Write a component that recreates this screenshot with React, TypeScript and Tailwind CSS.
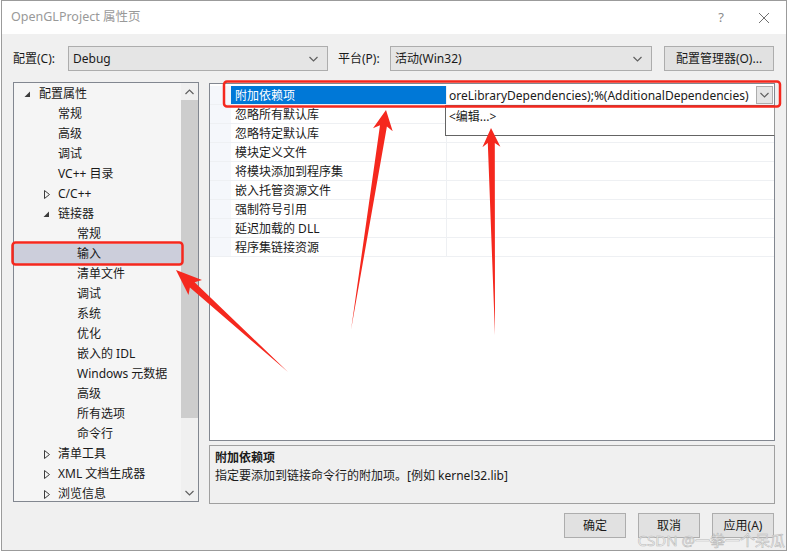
import React from "react";

type TreeItem = { t: string; lvl: 1 | 2 | 3; tri?: "open" | "closed"; sel?: boolean };

const treeItems: TreeItem[] = [
    { t: "配置属性", lvl: 1, tri: "open" },
    { t: "常规", lvl: 2 },
    { t: "高级", lvl: 2 },
    { t: "调试", lvl: 2 },
    { t: "VC++ 目录", lvl: 2 },
    { t: "C/C++", lvl: 2, tri: "closed" },
    { t: "链接器", lvl: 2, tri: "open" },
    { t: "常规", lvl: 3 },
    { t: "输入", lvl: 3, sel: true },
    { t: "清单文件", lvl: 3 },
    { t: "调试", lvl: 3 },
    { t: "系统", lvl: 3 },
    { t: "优化", lvl: 3 },
    { t: "嵌入的 IDL", lvl: 3 },
    { t: "Windows 元数据", lvl: 3 },
    { t: "高级", lvl: 3 },
    { t: "所有选项", lvl: 3 },
    { t: "命令行", lvl: 3 },
    { t: "清单工具", lvl: 2, tri: "closed" },
    { t: "XML 文档生成器", lvl: 2, tri: "closed" },
    { t: "浏览信息", lvl: 2, tri: "closed" },
];

const levelPad = { 1: "pl-[10px]", 2: "pl-[29px]", 3: "pl-[48px]" };

const gridRows = [
    "附加依赖项",
    "忽略所有默认库",
    "忽略特定默认库",
    "模块定义文件",
    "将模块添加到程序集",
    "嵌入托管资源文件",
    "强制符号引用",
    "延迟加载的 DLL",
    "程序集链接资源",
];

const font = "font-['Noto_Sans','Noto_Sans_CJK_SC',sans-serif]";

const Chevron = ({ up = false, className = "" }: { up?: boolean; className?: string }) => (
    <svg width="9" height="6" viewBox="0 0 9 6" className={className}>
        <polyline
            points={up ? "0.5,5 4.5,1 8.5,5" : "0.5,1 4.5,5 8.5,1"}
            fill="none"
            stroke="#606060"
            strokeWidth="1.2"
        />
    </svg>
);

const Combo = ({ value, w }: { value: string; w: string }) => (
    <div className={`${w} h-[25px] flex items-center justify-between border border-[#adadad] bg-[#e5e5e5] pl-[4px] pr-[9px]`}>
        <span>{value}</span>
        <Chevron />
    </div>
);

const Triangle = ({ kind }: { kind: "open" | "closed" }) =>
    kind === "open" ? (
        <svg width="7" height="7" viewBox="0 0 7 7">
            <polygon points="6,0.5 6,6 0.5,6" fill="#3c3c3c" />
        </svg>
    ) : (
        <svg width="6" height="9" viewBox="0 0 6 9" className="ml-[1px]">
            <polygon points="0.5,0.5 5.5,4.5 0.5,8.5" fill="none" stroke="#3c3c3c" strokeWidth="1" />
        </svg>
    );

function arrowPoints(
    tip: [number, number],
    tail: [number, number],
    headLen: number,
    headHalf: number,
    shaftHalf: number
) {
    const dx = tail[0] - tip[0];
    const dy = tail[1] - tip[1];
    const len = Math.hypot(dx, dy);
    const ux = dx / len;
    const uy = dy / len;
    const nx = -uy;
    const ny = ux;
    const bx = tip[0] + ux * headLen;
    const by = tip[1] + uy * headLen;
    const nb = 4; // notch back of head
    const pts: [number, number][] = [
        tip,
        [bx + nx * headHalf, by + ny * headHalf],
        [bx - ux * nb + nx * shaftHalf, by - uy * nb + ny * shaftHalf],
        tail,
        [bx - ux * nb - nx * shaftHalf, by - uy * nb - ny * shaftHalf],
        [bx - nx * headHalf, by - ny * headHalf],
    ];
    return pts.map((p) => `${p[0].toFixed(1)},${p[1].toFixed(1)}`).join(" ");
}

const Annotations = () => (
    <svg
        className="absolute left-0 top-0 pointer-events-none"
        width="788"
        height="553"
        viewBox="0 0 788 553"
    >
        <rect x="12.5" y="242.5" width="170" height="22" rx="3" fill="none" stroke="#f5281e" strokeWidth="2.5" />
        <rect x="224" y="81.5" width="556" height="25" rx="3" fill="none" stroke="#f5281e" strokeWidth="2.5" />
        <polygon points={arrowPoints([176, 270], [288, 372], 26, 10, 3.5)} fill="#f5281e" />
        <polygon points={arrowPoints([386, 110], [351, 330], 20, 10, 3.5)} fill="#f5281e" />
        <polygon points={arrowPoints([491, 128], [495, 335], 19, 9, 3.5)} fill="#f5281e" />
    </svg>
);

const App = () => {
    return (
        <div className={`relative w-[788px] h-[553px] overflow-hidden bg-white text-[12px] text-[#1a1a1a] ${font}`}>
            <div className="ml-[1px] w-[786px] h-[551px] border border-[#9b9b9b] bg-[#f0f0f0] flex flex-col">
                {/* title bar */}
                <div className="h-[33px] bg-white flex items-center justify-between pl-[9px] pr-[16px]">
                    <span className="text-[#999999] text-[12.5px]">OpenGLProject 属性页</span>
                    <div className="flex items-center gap-[34px] text-[#8a8a8a]">
                        <span className="text-[13px]">?</span>
                        <svg width="12" height="12" viewBox="0 0 12 12">
                            <path d="M1 1 L11 11 M11 1 L1 11" stroke="#707070" strokeWidth="1" />
                        </svg>
                    </div>
                </div>

                <div className="flex flex-col px-[11px]">
                    {/* config row */}
                    <div className="mt-[12px] flex items-center h-[25px]">
                        <span className="w-[55px]">配置(C):</span>
                        <Combo value="Debug" w="w-[260px]" />
                        <span className="ml-[10px] w-[52px]">平台(P):</span>
                        <Combo value="活动(Win32)" w="w-[262px]" />
                        <div className="ml-[12px] w-[110px] h-[25px] flex items-center justify-center border border-[#adadad] bg-[#e1e1e1]">
                            配置管理器(O)...
                        </div>
                    </div>

                    {/* main area */}
                    <div className="mt-[11px] flex gap-[10px]">
                        {/* tree */}
                        <div className="w-[186px] h-[420px] border border-[#828790] bg-[#f5f5f5] flex overflow-hidden">
                            <div className="flex-1 flex flex-col overflow-hidden pt-[1px]">
                                {treeItems.map((it, i) => (
                                    <div
                                        key={i}
                                        className={`h-[20px] shrink-0 flex items-center ${levelPad[it.lvl]} ${it.sel ? "bg-[#cccedb]" : ""}`}
                                    >
                                        <div className="w-[15px] flex items-center">
                                            {it.tri && <Triangle kind={it.tri} />}
                                        </div>
                                        <span className="whitespace-nowrap">{it.t}</span>
                                    </div>
                                ))}
                            </div>
                            <div className="w-[17px] bg-[#f0f0f0] flex flex-col items-center">
                                <div className="h-[17px] flex items-center justify-center">
                                    <Chevron up />
                                </div>
                                <div className="w-[17px] h-[318px] bg-[#cdcdcd]" />
                                <div className="flex-1" />
                                <div className="h-[17px] flex items-center justify-center">
                                    <Chevron />
                                </div>
                            </div>
                        </div>

                        {/* right column */}
                        <div className="flex-1 flex flex-col mt-[1px]">
                            <div className="relative h-[358px] border border-[#828790] bg-white pt-[2px]">
                                {gridRows.map((name, i) => (
                                    <div key={i} className="h-[19px] flex border-b border-[#eef0f3]">
                                        <div className="w-[21px] bg-[#f5f7fb]" />
                                        <div
                                            className={`w-[215px] flex items-center pl-[4px] pt-[1px] whitespace-nowrap ${
                                                i === 0 ? "bg-[#0078d7] text-white" : ""
                                            }`}
                                        >
                                            {name}
                                        </div>
                                        <div className="w-[1px] bg-[#eef0f3]" />
                                        <div className="flex-1 flex items-center overflow-hidden">
                                            {i === 0 && (
                                                <div className="flex-1 flex items-center justify-between pl-[2px]">
                                                    <span className="whitespace-nowrap pt-[1px]">
                                                        oreLibraryDependencies);%(AdditionalDependencies)
                                                    </span>
                                                    <div className="w-[17px] h-[18px] mr-[1px] flex items-center justify-center border border-[#adadad] bg-[#e5e5e5]">
                                                        <Chevron />
                                                    </div>
                                                </div>
                                            )}
                                        </div>
                                    </div>
                                ))}
                                {/* dropdown */}
                                <div className="absolute left-[235px] top-[21px] w-[330px] h-[31px] bg-white border border-[#646464] border-r-[#999999] border-r-dotted pl-[3px] pt-[2px]">
                                    &lt;编辑...&gt;
                                </div>
                            </div>

                            <div className="mt-[4px] h-[59px] border border-[#a0a0a0] bg-[#f0f0f0] px-[5px] pt-[3px] leading-[18px]">
                                <div className="font-bold">附加依赖项</div>
                                <div>指定要添加到链接命令行的附加项。[例如 kernel32.lib]</div>
                            </div>
                        </div>
                    </div>

                    {/* buttons */}
                    <div className="mt-[9px] flex justify-end gap-[12px] mr-[1px]">
                        <div className="w-[62px] h-[25px] flex items-center justify-center border border-[#adadad] bg-[#e1e1e1]">确定</div>
                        <div className="w-[62px] h-[25px] flex items-center justify-center border border-[#adadad] bg-[#e1e1e1]">取消</div>
                        <div className="w-[62px] h-[25px] flex items-center justify-center border border-[#adadad] bg-[#e1e1e1]">应用(A)</div>
                    </div>
                </div>
            </div>

            <Annotations />

            <div className="absolute right-[3px] top-[530px] text-[15px] leading-[20px] text-white/80 [-webkit-text-stroke:0.6px_#b8b8b8] whitespace-nowrap">
                CSDN @一拳一个呆瓜
            </div>
        </div>
    );
};

export default App;
